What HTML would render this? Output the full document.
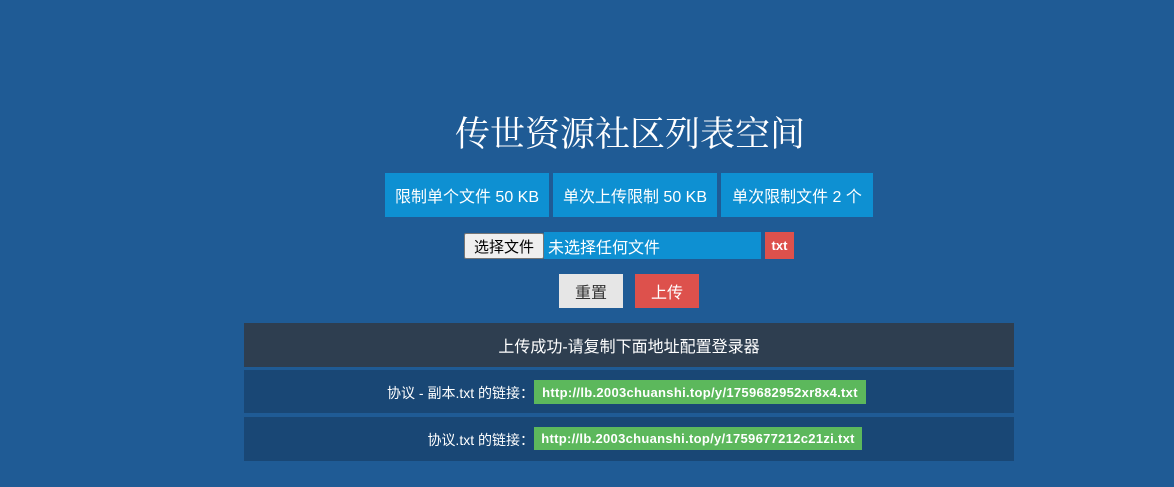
<!DOCTYPE html><html><head><meta charset="utf-8"><style>
body{margin:0;width:1174px;height:487px;background:#1f5b95;position:relative;overflow:hidden;font-family:"Liberation Sans","Noto Sans CJK SC",sans-serif;color:#fff}
.a{position:absolute;box-sizing:border-box;display:flex;align-items:center;justify-content:center;white-space:nowrap}
.l{position:absolute;font-size:13px;text-align:right;white-space:nowrap}
.g{position:absolute;background:#5cb85c;font-weight:bold;font-size:13px;display:flex;align-items:center;justify-content:center;white-space:nowrap;letter-spacing:0.3px}
</style></head><body>
<div class="a" style="left:380px;top:108px;width:500px;height:48px;font-family:'Liberation Serif','Noto Serif CJK SC',serif;font-size:35px">传世资源社区列表空间</div>
<div class="a" style="left:385px;top:173px;width:164px;height:44px;background:#0e90d2;font-size:16px">限制单个文件 50 KB</div>
<div class="a" style="left:553px;top:173px;width:164px;height:44px;background:#0e90d2;font-size:16px">单次上传限制 50 KB</div>
<div class="a" style="left:721px;top:173px;width:152px;height:44px;background:#0e90d2;font-size:16px">单次限制文件 2 个</div>
<div class="a" style="left:544px;top:232px;width:217px;height:27px;background:#0e90d2;font-size:16px;justify-content:flex-start;padding-left:4px">未选择任何文件</div>
<div class="a" style="left:464px;top:233px;width:80px;height:26px;background:#efefef;border:1px solid #767676;border-radius:2px;color:#000;font-size:15px">选择文件</div>
<div class="a" style="left:765px;top:232px;width:29px;height:27px;background:#dd514c;font-size:13px;font-weight:bold">txt</div>
<div class="a" style="left:559px;top:274px;width:64px;height:34px;background:#e6e6e6;color:#333;font-size:16px">重置</div>
<div class="a" style="left:635px;top:274px;width:64px;height:34px;background:#dd514c;font-size:16px">上传</div>
<div class="a" style="left:244px;top:323px;width:770px;height:44px;background:#2e3e50;font-size:16px">上传成功-请复制下面地址配置登录器</div>
<div class="a" style="left:244px;top:370px;width:770px;height:43px;background:#194775"></div>
<div class="a" style="left:244px;top:417px;width:770px;height:44px;background:#194775"></div>
<div class="l" style="right:640px;top:383px;font-size:14px">协议 - 副本.txt 的链接：</div>
<div class="g" style="left:534px;top:380px;width:332px;height:24px">http://lb.2003chuanshi.top/y/1759682952xr8x4.txt</div>
<div class="l" style="right:640px;top:430px;font-size:14px">协议.txt 的链接：</div>
<div class="g" style="left:534px;top:427px;width:328px;height:23px">http://lb.2003chuanshi.top/y/1759677212c21zi.txt</div>
</body></html>
